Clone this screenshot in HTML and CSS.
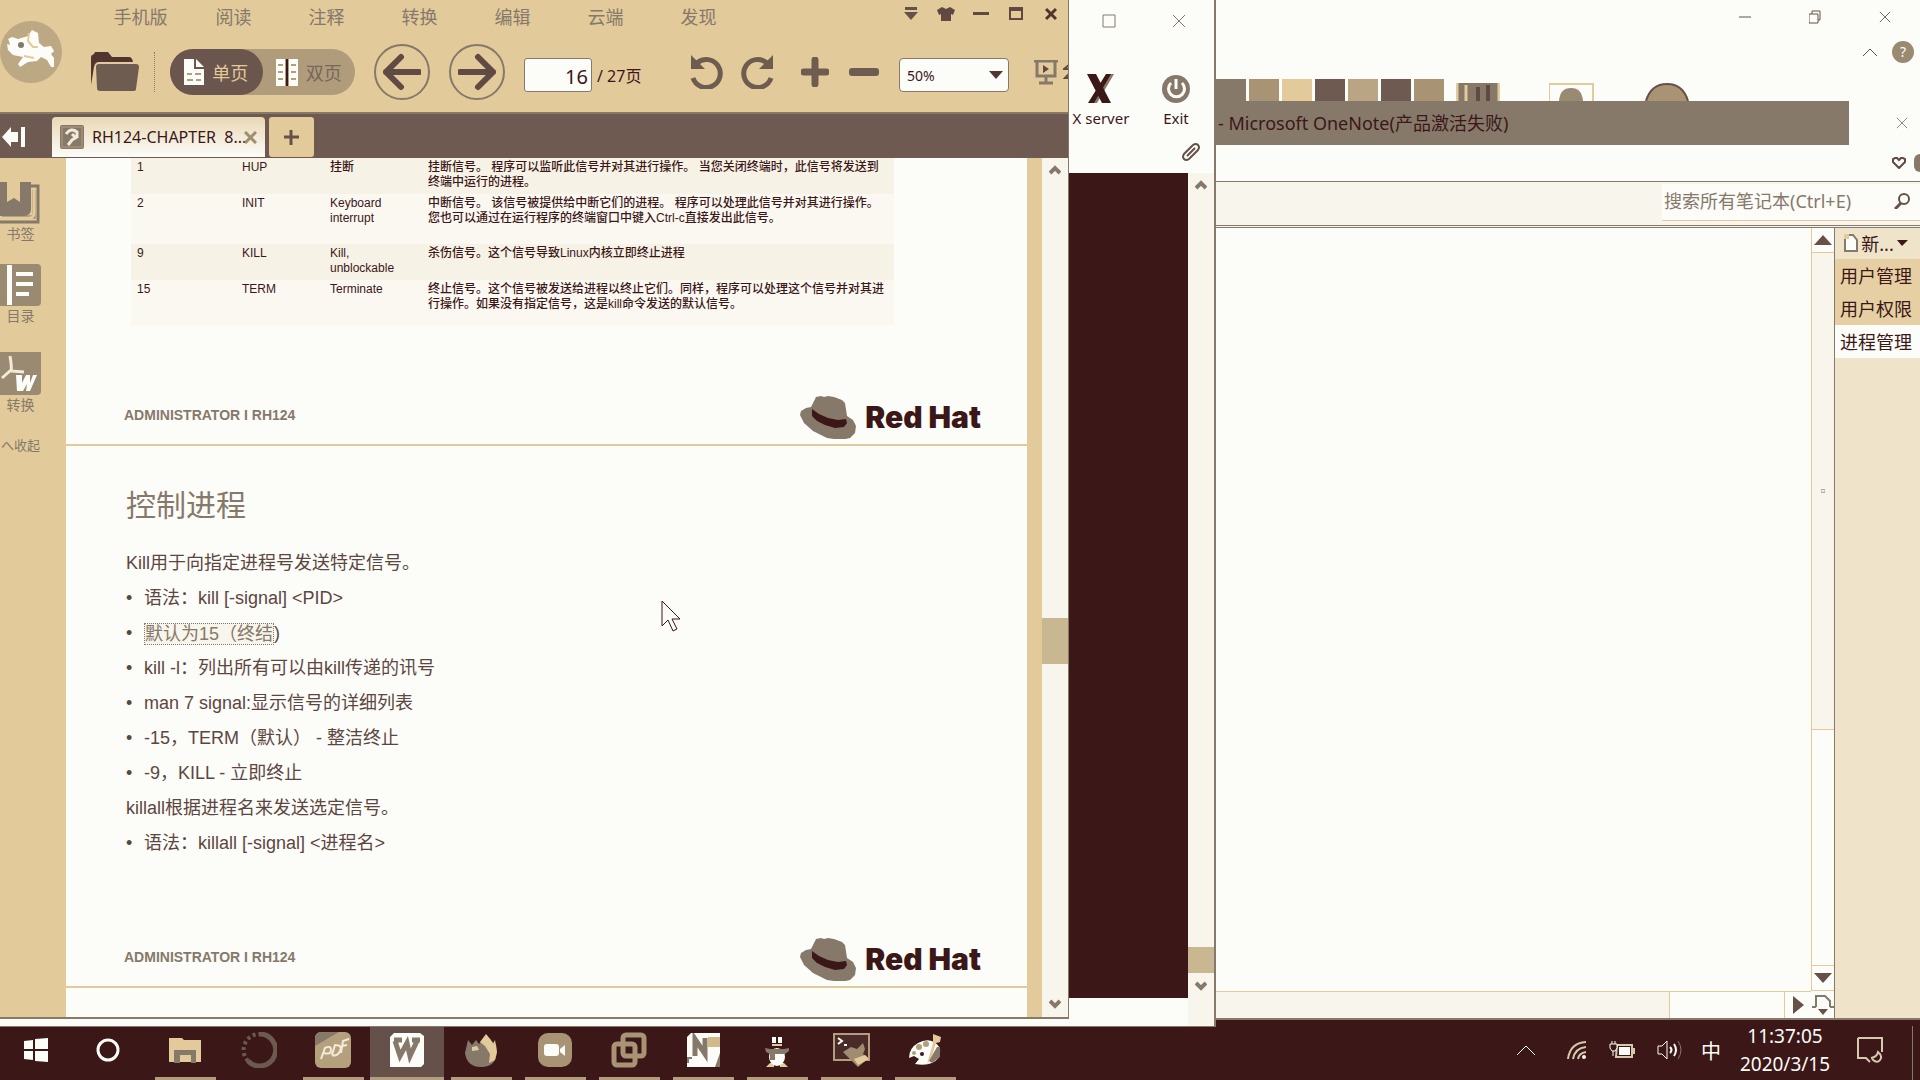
FILE: index.html
```html
<!DOCTYPE html>
<html lang="zh-CN">
<head>
<meta charset="utf-8">
<title>RH124-CHAPTER 8</title>
<link rel="stylesheet" href="styles.css">
</head>
<body>
<svg class="defs" aria-hidden="true">
  <symbol id="hat" viewBox="0 0 56 43">
    <path fill="#86796a" d="M16 1l5-1 3 1 4-1 6 1 8 3 3 3 2 13 6 4 3 6-1 7-5 5-9 2-14-2-14-7-9-8-4-8 1-4 5-3 5-1z"/>
    <path fill="#3b1718" d="M12 13l7 5 9 4 10 2 8-1 1 4-3 4-9 1-10-3-8-4-5-5z"/>
  </symbol>
  <symbol id="close" viewBox="0 0 14 14"><path d="M1 1l12 12M13 1L1 13" fill="none" stroke="currentColor"/></symbol>
</svg>

<main class="desktop">
  <div class="front">
    <section class="reader">
      <header class="reader-head">
        <svg class="elephant" width="64" height="62" viewBox="0 0 64 62">
          <circle cx="31" cy="31" r="31" fill="#bda884"/>
          <path fill="#fcfcf9" d="M8 18l4-2 6 2 10-3 4-6 6 3 1 10 5 4 7-1 3 5-3 3 3 4 0 9-3 0-4-7-6-3-4 4-9 1-8 5-2-3 5-7-10-2-5-5-1-6 3 1-1-4z"/>
          <circle cx="21" cy="24" r="3" fill="#86796a"/>
          <path d="M29 12l-1 8 5 6 5 0M24 35l10 2" fill="none" stroke="#e2ca9b" stroke-width="2"/>
        </svg>
        <div class="reader-bars">
          <div class="menu-row">
            <nav class="menu">
              <button>手机版</button><button>阅读</button><button>注释</button><button>转换</button><button>编辑</button><button>云端</button><button>发现</button>
            </nav>
            <div class="win-buttons">
              <button aria-label="菜单"><svg width="14" height="14" viewBox="0 0 14 14"><path fill="#665149" d="M1 0h12v3H1zM0 5h14L7 13z"/></svg></button>
              <button aria-label="皮肤"><svg width="18" height="14" viewBox="0 0 18 14"><path fill="#614840" d="M0 3l5-3 4 2 4-2 5 3-2 5-2-1v7H4V7L2 8z"/></svg></button>
              <button aria-label="最小化"><svg width="16" height="14"><path fill="#614840" d="M0 5h16v3H0z"/></svg></button>
              <button aria-label="最大化"><svg width="14" height="14"><path d="M1 1h12v11H1zM1 3h12" fill="none" stroke="#614840" stroke-width="2"/></svg></button>
              <button aria-label="关闭"><svg width="12" height="14" viewBox="0 0 12 14"><path d="M1 2l10 10M11 2L1 12" stroke="#513330" stroke-width="3"/></svg></button>
            </div>
          </div>
          <div class="tools">
            <button aria-label="打开"><svg width="49" height="40" viewBox="0 0 49 40"><path fill="#513531" d="M1 33V5q0-2 3-3l1-2h13l4 5h17q3 0 4 5H9q-4 0-5 5z"/><path fill="#6f5c51" d="M9 12h37q3 0 3 3l-3 22q0 2-3 2H10q-3 0-3-3L6 15q0-3 3-3z"/></svg></button>
            <i class="sep"></i>
            <div class="view-toggle">
              <button class="view on"><svg width="20" height="26"><path fill="#fcfcf9" d="M0 0h10v10h10v16H0zM12 0l8 8h-8z"/><path stroke="#b39d7c" d="M3 15h5m3 0h6M3 21h6m3 0h5" stroke-width="2"/></svg>单页</button>
              <button class="view"><svg width="22" height="27"><path fill="#fcfcf9" d="M0 0h9v27H0zM13 0h9v27h-9z"/><path stroke="#3b1718" stroke-width="2" d="M11 0v27"/><path stroke="#b39d7c" stroke-width="2" d="M2 6h5m8 0h5M2 13h5m8 0h5M2 20h5m8 0h5"/></svg>双页</button>
            </div>
            <button class="round" aria-label="上一页"><svg width="38" height="38" viewBox="0 0 38 38"><path d="M18 4L3 19l15 15M3 19h33" fill="none" stroke="#614a43" stroke-width="6" stroke-linecap="round"/></svg></button>
            <button class="round" aria-label="下一页"><svg width="38" height="38" viewBox="0 0 38 38"><path d="M20 4l15 15-15 15M35 19H2" fill="none" stroke="#614a43" stroke-width="6" stroke-linecap="round"/></svg></button>
            <label class="pageno"><input value="16" aria-label="页码">/ 27页</label>
            <div class="edit-tools">
              <button aria-label="向左旋转"><svg width="34" height="34" viewBox="0 0 34 34"><path d="M7 8a14 14 0 1 1-4 15" fill="none" stroke="#6f5c51" stroke-width="5"/><path fill="#6f5c51" d="M1 0v14h14z"/></svg></button>
              <button aria-label="向右旋转"><svg width="34" height="34" viewBox="0 0 34 34"><path d="M27 8a14 14 0 1 0 4 15" fill="none" stroke="#6f5c51" stroke-width="5"/><path fill="#6f5c51" d="M33 0v14H19z"/></svg></button>
            </div>
            <div class="zoom-tools">
              <button aria-label="放大"><svg width="28" height="30"><path d="M14 3v24M3 15h22" stroke="#6f5c51" stroke-width="7" stroke-linecap="round"/></svg></button>
              <button aria-label="缩小"><svg width="30" height="8"><rect width="30" height="8" rx="3" fill="#6f5c51"/></svg></button>
              <div class="select-wrap"><select aria-label="缩放"><option>50%</option></select><svg width="14" height="8"><path fill="#513531" d="M0 0h14L7 8z"/></svg></div>
            </div>
            <button aria-label="放映"><svg width="24" height="25"><path d="M0 1h24M3 2v14h18V2M12 16v7M5 23h14" fill="none" stroke="#86796a" stroke-width="3"/><path fill="#614a43" d="M9 5l6 4-6 4z"/></svg></button>
            <svg class="cut" width="5" height="16"><path d="M6 1L1 5h5M6 10l-4 4h4" fill="none" stroke="#614a43" stroke-width="2"/></svg>
          </div>
        </div>
      </header>

      <div class="tabs">
        <button class="collapse" aria-label="收起侧栏"><svg width="23" height="20"><path fill="#fcfcf9" d="M0 10l9-10v5h7v10H9v5zM19 0h4v20h-4z"/></svg></button>
        <div class="tab"><svg width="24" height="24" viewBox="0 0 24 24"><rect width="24" height="24" rx="2" fill="#86796a"/><rect x="2" y="2" width="20" height="20" fill="none" stroke="#b39d7c"/><path d="M6 9q5-7 11-2v5l-5 3-4 5M12 9l4 4" fill="none" stroke="#f3ead8" stroke-width="3"/></svg><span>RH124-CHAPTER&nbsp; 8...</span><button aria-label="关闭标签"><svg width="13" height="13" viewBox="0 0 13 13"><path d="M1 1l11 11M12 1L1 12" stroke="#a08c6f" stroke-width="3"/></svg></button></div>
        <button class="new-tab" aria-label="新建标签"><svg width="15" height="15"><path d="M7 0v15M0 7h15" stroke="#665149" stroke-width="3"/></svg></button>
      </div>

      <div class="reader-body">
        <aside class="rail">
          <button><svg width="41" height="42"><path fill="#86796a" d="M0 0h7v20l7-4 6 4V0h11v27q0 7-7 7H0z"/><path d="M31 4h7v36H0M34 8v27H2" fill="none" stroke="#86796a" stroke-width="3"/><path d="M34 6v25q0 5-5 5H2" fill="none" stroke="#e2ca9b" stroke-width="3"/></svg>书签</button>
          <button><svg width="41" height="42"><path fill="#9a8a72" d="M0 0h37q4 0 4 4v34q0 4-4 4H0z"/><path fill="#fcfcf9" d="M7 1h5v40H7zM16 8h17v4H16zM16 18h17v4H16zM16 28h13v4H16z"/></svg>目录</button>
          <button><svg width="41" height="43"><path fill="#9a8a72" d="M0 0h41v39q0 4-4 4H0z"/><path d="M10 4q2 12 1 15l13 1M11 18L2 26" fill="none" stroke="#f3ead8" stroke-width="3"/><path fill="#fcfcf9" d="M16 23h6v8l4-8h4v8l3-8h4l-7 16h-4l1-7-4 7h-6z"/></svg>转换</button>
          <button class="fold">へ收起</button>
        </aside>

        <div class="pages">
          <article class="page page-a">
            <table>
              <tr><td>1</td><td>HUP</td><td>挂断</td><td>挂断信号。 程序可以监听此信号并对其进行操作。 当您关闭终端时，此信号将发送到<br>终端中运行的进程。</td></tr>
              <tr class="tall"><td>2</td><td>INIT</td><td>Keyboard<br>interrupt</td><td>中断信号。 该信号被提供给中断它们的进程。 程序可以处理此信号并对其进行操作。<br>您也可以通过在运行程序的终端窗口中键入Ctrl-c直接发出此信号。</td></tr>
              <tr><td>9</td><td>KILL</td><td>Kill,<br>unblockable</td><td>杀伤信号。这个信号导致Linux内核立即终止进程</td></tr>
              <tr class="last"><td>15</td><td>TERM</td><td>Terminate</td><td>终止信号。这个信号被发送给进程以终止它们。同样，程序可以处理这个信号并对其进<br>行操作。如果没有指定信号，这是kill命令发送的默认信号。</td></tr>
            </table>
            <footer><span>ADMINISTRATOR I RH124</span><div class="brand"><svg width="56" height="43"><use href="#hat"/></svg><b>Red Hat</b></div></footer>
          </article>
          <article class="page page-b">
            <h1>控制进程</h1>
            <p>Kill用于向指定进程号发送特定信号。</p>
            <ul>
              <li>语法：kill [-signal] &lt;PID&gt;</li>
              <li><mark>默认为15（终结</mark>)</li>
              <li>kill -l：列出所有可以由kill传递的讯号</li>
              <li>man 7 signal:显示信号的详细列表</li>
              <li>-15，TERM（默认） - 整洁终止</li>
              <li>-9，KILL - 立即终止</li>
            </ul>
            <p>killall根据进程名来发送选定信号。</p>
            <ul><li>语法：killall [-signal] &lt;进程名&gt;</li></ul>
            <footer><span>ADMINISTRATOR I RH124</span><div class="brand"><svg width="56" height="43"><use href="#hat"/></svg><b>Red Hat</b></div></footer>
            <svg class="pointer" width="20" height="32" viewBox="0 0 20 32"><path d="M1 1v25l6-6 5 11 4-2-5-10h8z" fill="#fcfcf9" stroke="#3b1718"/></svg>
          </article>
        </div>

        <div class="scroll">
          <svg width="12" height="10"><path d="M1 8l5-5 5 5" fill="none" stroke="#86796a" stroke-width="4"/></svg>
          <i></i>
          <svg width="12" height="10"><path d="M1 2l5 5 5-5" fill="none" stroke="#86796a" stroke-width="4"/></svg>
        </div>
      </div>
    </section>

    <section class="terminal">
      <div class="term-win"><button aria-label="最大化"><svg width="14" height="14"><path d="M1 1h12v12H1z" fill="none" stroke="#86796a"/></svg></button><button aria-label="关闭"><svg width="14" height="14"><use href="#close"/></svg></button></div>
      <div class="term-tools">
        <button><svg width="28" height="30" viewBox="0 0 28 30"><path fill="#86796a" d="M21 0h6L10 29H3z"/><path fill="#3b1718" d="M0 0h9l15 29h-9zM19 0h5L7 29H1z"/></svg>X server</button>
        <button><svg width="29" height="30" viewBox="0 0 29 30"><circle cx="14" cy="15" r="14" fill="#86796a"/><path d="M9 9a8 8 0 1 0 11 0M14 5v10" fill="none" stroke="#fcfcf9" stroke-width="3"/></svg>Exit</button>
      </div>
      <div class="clip"><svg width="20" height="20" viewBox="0 0 20 20"><path d="M3 12L12 3q3-2 5 0t0 5l-9 9q-3 2-5 0t0-5l8-8M6 14l8-8" fill="none" stroke="#665149" stroke-width="2"/></svg></div>
      <div class="term-body">
        <div class="screen"></div>
        <div class="scroll">
          <svg width="12" height="10"><path d="M1 8l5-5 5 5" fill="none" stroke="#86796a" stroke-width="4"/></svg>
          <i></i>
          <svg width="12" height="10"><path d="M1 2l5 5 5-5" fill="none" stroke="#86796a" stroke-width="4"/></svg>
        </div>
      </div>
    </section>
  </div>

  <section class="note">
    <div class="note-top">
      <div class="note-win">
        <button aria-label="最小化"><svg width="12" height="14"><path d="M0 7h12" stroke="#665149"/></svg></button>
        <button aria-label="还原"><svg width="12" height="14"><path d="M0 4h9v9H0zM3 4V1h8v9H9" fill="none" stroke="#665149"/></svg></button>
        <button aria-label="关闭"><svg width="12" height="12"><use href="#close"/></svg></button>
      </div>
      <div class="note-help"><svg width="16" height="10"><path d="M1 9l7-7 7 7" fill="none" stroke="#665149"/></svg><span>?</span></div>
      <div class="thumbs">
        <i class="g1"></i><i class="g2"></i><i class="g3"></i><i class="g4"></i><i class="g5"></i><i class="g4"></i><i class="g2"></i>
        <svg width="44" height="18"><path fill="#86796a" d="M0 0h44v18H0z"/><path d="M1 0v18M43 0v18M10 2v16" stroke="#e2ca9b" stroke-width="3"/><path d="M22 4v14M32 2v16" stroke="#614a43" stroke-width="4"/></svg>
        <svg class="t2" width="45" height="18"><path d="M0 18V1h44v17" fill="none" stroke="#e2ca9b" stroke-width="2"/><path fill="#9a8a72" d="M10 18q1-13 12-13t12 13z"/></svg>
        <svg class="t3" width="45" height="18"><path d="M1 18Q6 1 22 1t21 17" fill="#a89474" stroke="#665149" stroke-width="2"/></svg>
      </div>
    </div>
    <div class="note-title"><h2>- Microsoft OneNote(产品激活失败)</h2><button aria-label="关闭"><svg width="12" height="14"><use href="#close"/></svg></button></div>
    <div class="note-fav"><svg width="14" height="12"><path d="M7 11L1 5V2l2-1h2l2 2 2-2h2l2 1v3z" fill="none" stroke="#614a43" stroke-width="2"/></svg><i></i></div>
    <div class="search-row"><label class="search"><input aria-label="搜索" placeholder="搜索所有笔记本(Ctrl+E)"><svg width="16" height="16"><circle cx="10" cy="6" r="5" fill="none" stroke="#665149" stroke-width="2"/><path d="M7 10l-6 6" stroke="#665149" stroke-width="3"/></svg></label></div>
    <div class="note-body">
      <div class="canvas"></div>
      <div class="vbar">
        <span><svg width="18" height="10"><path fill="#665149" d="M9 0l9 10H0z"/></svg></span><i>▫</i><em></em><span><svg width="18" height="10"><path fill="#665149" d="M0 0h18L9 10z"/></svg></span>
      </div>
      <aside class="note-pages">
        <button class="new"><svg width="14" height="18"><path d="M1 1h8l4 5v11H1z" fill="#fcfcf9" stroke="#86796a" stroke-width="2"/><path fill="#e2ca9b" d="M0 0h5v5H0z"/></svg>新...<svg width="11" height="6"><path fill="#3b1718" d="M0 0h11L5 6z"/></svg></button>
        <button>用户管理</button><button>用户权限</button><button class="on">进程管理</button>
      </aside>
      <div class="hbar"><i></i><em></em><span><svg width="11" height="18"><path fill="#665149" d="M0 0l11 9-11 9z"/></svg></span></div>
      <div class="corner"><svg width="22" height="20"><path d="M4 12V1h9l5 5v6M0 12h4m14 0h4" fill="none" stroke="#86796a" stroke-width="2"/><path fill="#665149" d="M6 14h10l-5 6z"/></svg></div>
    </div>
  </section>
</main>

<footer class="taskbar">
  <div class="apps">
    <button aria-label="开始"><svg width="24" height="24"><path fill="#fcfcf9" d="M0 3l9-1v9H0zM11 1l13-1v11H11zM0 13h9v9l-9-1zM11 13h13v11l-13-1z"/></svg></button>
    <button aria-label="Cortana"><svg width="24" height="24"><circle cx="12" cy="12" r="10" fill="none" stroke="#fcfcf9" stroke-width="3"/></svg></button>
    <button class="run" aria-label="文件"><svg width="32" height="26"><path fill="#e2ca9b" d="M0 1h13l2 2h17v22H0z"/><path fill="#86796a" d="M5 13h22v13h-5v-8H11v8H5z"/></svg></button>
    <button aria-label="浏览器"><svg width="36" height="36"><path d="M18 2a16 16 0 1 1-11 27" fill="none" stroke="#6c5a50" stroke-width="5"/><path d="M7 29A16 16 0 0 1 18 2" fill="none" stroke="#6c5a50" stroke-width="4" stroke-dasharray="3 3"/></svg></button>
    <button class="run" aria-label="PDF"><svg width="36" height="36" viewBox="0 0 36 36"><rect width="36" height="36" rx="6" fill="#b5a07e"/><path fill="#86796a" d="M4 0h20L0 14V4z"/><path d="M6 27l4-11q6-3 6 2t-7 3M17 23l3-10q8 0 5 6t-8 4M26 21l2-12 6-2M27 14l5-1" fill="none" stroke="#f3ead8" stroke-width="2"/></svg></button>
    <button class="run active" aria-label="WPS"><svg width="34" height="34" viewBox="0 0 34 34"><path fill="#fcfcf9" d="M4 0h26l4 3v28l-3 3H0V4z"/><path d="M5 8l5 15 7-13 3 13 7-15M4 7h8M22 7h8" fill="none" stroke="#86796a" stroke-width="5"/></svg></button>
    <button class="run" aria-label="Firefox"><svg width="32" height="33" viewBox="0 0 32 33"><path fill="#86796a" d="M0 19L3 6l4 5 4-5 3 4 5-6 6 2 6 4q4 23-15 23Q2 33 0 19z"/><path fill="#e2ca9b" d="M15 8l6-8 5 6 2 4 2-4 2 12-2 8-6 3 1-9-5-8zM7 13l5-1 2 4-7 1z"/></svg></button>
    <button class="run" aria-label="会议"><svg width="34" height="34"><rect width="34" height="34" rx="10" fill="#a89474"/><rect x="6" y="11" width="15" height="12" rx="3" fill="#fcfcf9"/><path fill="#fcfcf9" d="M22 16l5-4v11l-5-4z"/></svg></button>
    <button class="run" aria-label="虚拟机"><svg width="36" height="36"><rect x="12" y="3" width="21" height="21" rx="3" fill="none" stroke="#a89474" stroke-width="5"/><rect x="3" y="12" width="21" height="21" rx="3" fill="none" stroke="#a89474" stroke-width="5"/></svg></button>
    <button class="run" aria-label="OneNote"><svg width="33" height="34"><path fill="#fcfcf9" d="M4 0h29v34H0V4z"/><path fill="#d2b98c" d="M21 4h12v10H21z"/><path d="M8 23V6l10 15V5" fill="none" stroke="#86796a" stroke-width="5"/><path fill="#86796a" d="M0 24h5v2H2v4H0zM33 20v14h-5z"/></svg></button>
    <button class="run" aria-label="QQ"><svg width="24" height="34" viewBox="0 0 24 34"><path fill="#fcfcf9" d="M7 4h4v6H7zM13 4h4v6h-4z"/><path fill="#e2ca9b" d="M7 11h10v2H7zM1 34l4-4h4v4zM23 34l-4-4h-4v4z"/><ellipse cx="12" cy="24" rx="8" ry="9" fill="#fcfcf9"/><path fill="#86796a" d="M0 15l5 1h14l5-1v3l-4 3H10v6H5v-6l-4-2z"/></svg></button>
    <button class="run" aria-label="MobaXterm"><svg width="37" height="35"><path d="M1 1h35v26H1z" fill="#4b2b29" stroke="#b39d7c" stroke-width="2"/><path d="M5 5l4 3-4 3M11 12h3" fill="none" stroke="#fcfcf9" stroke-width="2"/><path fill="#a08c6f" d="M10 19l8-5 6 2 6-6 2 6-2 5 6 4-11 9z"/><path fill="#e2ca9b" d="M21 26l11-4 4 4-11 6z"/></svg></button>
    <button class="run" aria-label="画图"><svg width="32" height="33" viewBox="0 0 32 33"><path fill="#fcfcf9" d="M0 24q0-10 9-15t16-1q7 4 6 11t-8 10-17 1l4-5-5-3z"/><path fill="#e2ca9b" d="M24 0l8 3-1 5-4 1-5 16-4 5 6-21z"/><circle cx="10" cy="13" r="3" fill="#b39d7c"/><circle cx="17" cy="10" r="3" fill="#b39d7c"/><circle cx="5" cy="19" r="2" fill="#b39d7c"/><circle cx="13" cy="20" r="2" fill="#3b1718"/><path fill="#86796a" d="M28 13h3v10l-8 6-3-2z"/></svg></button>
  </div>
  <div class="tray">
    <svg width="20" height="12"><path d="M1 11l9-9 9 9" fill="none" stroke="#fcfcf9"/></svg>
    <svg width="20" height="20"><path d="M1 19Q3 3 19 2M6 19Q8 8 19 7M11 19q1-6 8-7" fill="none" stroke="#d6c9b0" stroke-width="2"/><circle cx="17" cy="17" r="2" fill="#fcfcf9"/></svg>
    <svg width="26" height="18"><path d="M8 4h15v12H7zM23 8h2v4h-2" fill="none" stroke="#d6c9b0" stroke-width="2"/><path fill="#fcfcf9" d="M10 6h11v8H10z"/><path fill="#3b1718" stroke="#fcfcf9" d="M1 3h7v4l-2 3H3L1 7zM3 0v3M6 0v3M4 10v5"/></svg>
    <svg width="26" height="20"><path d="M1 6h4l5-5v18l-5-5H1z" fill="none" stroke="#fcfcf9"/><path d="M13 7q3 3 0 6M17 4q4 6 0 12" fill="none" stroke="#fcfcf9" stroke-width="2"/><path d="M21 1q6 9 0 18" fill="none" stroke="#86796a"/></svg>
    <span class="ime">中</span>
    <time>11:37:05<br>2020/3/15</time>
    <svg width="26" height="26"><path d="M1 1h24v14M1 1v20h8l4 4M14 21q6-1 7-6 5 4 2 8t-8-1" fill="none" stroke="#d6c9b0" stroke-width="2"/></svg>
    <i></i>
  </div>
</footer>
</body>
</html>
```

FILE: styles.css
```css
:root {
  --paper: #fcfcf9;
  --tan: #e2ca9b;
  --grey: #86796a;
  --ink: #3b1718;
  --mist: #f8f5ec;
  --sand: #efe3ca;
}
* { box-sizing: border-box; }
body {
  margin: 0;
  height: 100vh;
  display: flex;
  flex-direction: column;
  overflow: hidden;
  background: var(--ink);
  color: var(--ink);
  font-family: "Noto Sans", "Noto Sans CJK SC", sans-serif;
  font-size: 18px;
}
button, input, select { font: inherit; color: inherit; }
button { margin: 0; padding: 0; border: 0; background: none; display: flex; align-items: center; justify-content: center; }
svg { display: block; flex: none; }
.defs { position: absolute; width: 0; height: 0; }

.desktop { flex: 1; min-height: 0; display: grid; grid-template-columns: minmax(0, 1216fr) minmax(0, 704fr); }
.front { display: grid; grid-template-columns: minmax(0, 1fr) 147px; margin-bottom: -7px; background: var(--paper); z-index: 1; min-height: 0; border-bottom: 1px solid var(--grey); }

/* PDF reader */
.reader { display: flex; flex-direction: column; min-height: 0; margin-bottom: 7px; border-right: 1px solid var(--grey); border-bottom: 2px solid var(--grey); background: var(--tan); }
.reader-head { display: flex; height: 112px; overflow: hidden; flex: none; }
.elephant { margin-top: 21px; }
.reader-bars { flex: 1; min-width: 0; }
.menu-row { display: flex; justify-content: space-between; height: 36px; }
.menu { display: flex; height: 32px; padding-left: 30px; color: var(--grey); }
.menu button { width: 93px; }
.win-buttons { display: flex; height: 28px; }
.win-buttons button { width: 35px; }
.tools { display: flex; align-items: center; height: 72px; padding-left: 26px; }
.sep { height: 40px; margin: 0 15px; border-left: 1px dotted var(--grey); }
.view-toggle { display: flex; width: 185px; height: 46px; border-radius: 23px; background: #b09b7a; }
.view { flex: 1; gap: 8px; color: #75675a; }
.view.on { background: #6a564d; color: var(--tan); border-radius: 23px; }
.round { width: 56px; height: 56px; margin-left: 19px; border: 2px solid var(--grey); border-radius: 50%; }
.pageno { display: flex; align-items: center; gap: 5px; margin-left: 19px; padding-top: 6px; font-size: 16px; width: 166px; white-space: nowrap; }
.pageno input { width: 68px; height: 34px; padding: 2px 3px 0; border: 1px solid var(--grey); border-radius: 3px; background: var(--paper); text-align: right; font-size: 20px; }
.edit-tools { display: flex; gap: 16px; }
.zoom-tools { display: flex; align-items: center; gap: 20px; margin: 0 25px 0 27px; }
.select-wrap { display: grid; align-items: center; padding-top: 6px; }
.select-wrap > * { grid-area: 1 / 1; }
.select-wrap svg { justify-self: end; margin-right: 6px; }
select { appearance: none; width: 110px; height: 34px; padding: 0 7px; border: 1px solid var(--grey); border-radius: 4px; background: var(--paper); font-size: 14px; }
.cut { margin-left: 5px; }

.tabs { display: flex; height: 46px; flex: none; padding: 3px 0 1px; background: #6e5a50; border-top: 2px solid var(--grey); font-size: 16px; }
.collapse { width: 26px; margin-right: 26px; }
.tab { display: flex; align-items: center; gap: 8px; width: 213px; padding: 0 8px; border-radius: 4px 4px 0 0; background: linear-gradient(#ead8b4, var(--paper)); white-space: nowrap; }
.tab span { flex: 1; min-width: 0; }
.new-tab { width: 45px; margin-left: 4px; background: var(--tan); border-radius: 3px; }

.reader-body { flex: 1; min-height: 0; display: grid; grid-template-columns: 66px minmax(0, 1fr) 15px 26px; }
.rail { display: flex; flex-direction: column; align-items: flex-start; padding-top: 24px; gap: 20px; font-size: 14px; color: var(--grey); }
.rail button { flex-direction: column; line-height: 20px; width: 41px; }
.rail button:nth-child(2) { margin-bottom: 6px; }
.rail .fold { font-size: 13px; }
.pages { overflow: hidden; background: var(--paper); }
.page { position: relative; display: flex; flex-direction: column; padding: 0 46px 0 58px; border-bottom: 2px solid var(--tan); font-family: "Liberation Sans", "Noto Sans CJK SC", sans-serif; }
.page-a { height: 288px; padding-top: 0; }
.page-b { height: 542px; padding-top: 34px; }
table { width: 763px; margin-left: 7px; table-layout: fixed; border-collapse: collapse; font-size: 12px; font-weight: 500; line-height: 15px; white-space: nowrap; }
tr { height: 36px; background: #f7f2e6; }
tr.tall { height: 50px; background: #faf8f1; }
tr.last { height: 45px; background: #faf8f1; }
td { padding: 2px 6px 0; vertical-align: top; }
td:nth-child(1) { width: 105px; }
td:nth-child(2) { width: 88px; }
td:nth-child(3) { width: 98px; }
.page footer { display: flex; align-items: center; justify-content: space-between; margin-top: auto; padding-bottom: 5px; color: var(--grey); font-weight: bold; font-size: 14px; }
.page footer span { padding-bottom: 5px; }
.brand { display: flex; align-items: center; gap: 9px; color: var(--ink); font-family: Inter, sans-serif; font-size: 30px; line-height: 43px; }
h1 { margin: 0 0 14px 2px; font-size: 30px; line-height: 52px; font-weight: 400; color: var(--grey); }
.page p, .page ul { margin: 0 0 0 2px; padding: 0; font-size: 18px; line-height: 35px; color: #5d463f; }
.page li { display: flex; align-items: center; height: 35px; }
.page li::before { content: "•"; width: 18px; }
mark { height: 22px; line-height: 20px; border: 1px dotted var(--grey); background: var(--mist); color: var(--grey); }
.pointer { position: absolute; left: 595px; top: 154px; }

.scroll { display: flex; flex-direction: column; align-items: center; background: var(--mist); }
.reader-body .scroll { grid-column: 4; padding: 7px 0 8px; }
.scroll i { width: 100%; background: #c9b792; }
.reader-body .scroll i { height: 46px; margin: 443px 0 auto; }

/* Terminal */
.terminal { display: flex; flex-direction: column; background: var(--paper); border-right: 2px solid var(--grey); min-height: 0; }
.term-win { display: flex; justify-content: flex-end; height: 42px; color: var(--grey); }
.term-win button { width: 70px; }
.term-tools { display: flex; margin-top: 32px; font-size: 15px; white-space: nowrap; }
.term-tools button { flex-direction: column; width: 60px; margin-left: 2px; line-height: 26px; gap: 1px; }
.term-tools button + button { width: 54px; margin-left: 18px; }
.clip { display: flex; justify-content: flex-end; padding: 11px 13px 11px 0; }
.term-body { flex: 1; display: flex; min-height: 0; }
.screen { flex: 1; margin-bottom: 28px; background: var(--ink); }
.term-body .scroll { width: 26px; padding: 7px 0 35px; }
.term-body .scroll i { height: 26px; margin: auto 0 8px; }

/* Notebook */
.note { display: flex; flex-direction: column; min-height: 0; background: var(--paper); color: var(--ink); }
.note-top { display: flex; flex-direction: column; height: 101px; flex: none; color: #665149; }
.note-win { display: flex; justify-content: flex-end; height: 33px; }
.note-win button { width: 70px; }
.note-help { display: flex; justify-content: flex-end; align-items: center; gap: 14px; height: 38px; padding-right: 6px; }
.note-help span { width: 22px; height: 22px; border-radius: 50%; background: #9a8a72; color: var(--paper); text-align: center; font-size: 14px; line-height: 22px; }
.thumbs { display: flex; align-items: flex-end; gap: 3px; margin-top: auto; }
.thumbs i { width: 30px; height: 22px; }
.thumbs svg { margin-left: 9px; }
.thumbs .t2 { margin-left: 46px; }
.thumbs .t3 { margin-left: 48px; }
.g1 { background: var(--grey); }
.g2 { background: #a89474; }
.g3 { background: var(--tan); }
.g4 { background: #6e5a50; }
.g5 { background: #b9a583; }
.note-title { display: flex; height: 44px; flex: none; }
h2 { flex: 1; margin: 0; padding-left: 2px; background: var(--grey); font-size: 18px; line-height: 44px; font-weight: 400; }
.note-title button { width: 71px; padding-left: 34px; color: var(--grey); }
.note-fav { display: flex; align-items: center; justify-content: flex-end; gap: 8px; height: 37px; flex: none; border-bottom: 1px solid var(--grey); }
.note-fav i { width: 6px; height: 18px; border-radius: 9px 0 0 9px; background: var(--grey); }
.search-row { display: flex; justify-content: flex-end; height: 46px; flex: none; padding: 2px 0 4px; background: var(--mist); border-bottom: 3px double var(--grey); }
.search { display: flex; align-items: center; width: 258px; padding: 0 10px 3px 2px; background: var(--paper); border-bottom: 1px solid var(--tan); }
.search input { flex: 1; min-width: 0; padding: 0; border: 0; background: none; }
.search input::placeholder { color: var(--grey); opacity: 1; }
.note-body { flex: 1; min-height: 0; display: grid; grid-template-columns: minmax(0, 1fr) 24px 85px; grid-template-rows: minmax(0, 1fr) 27px; border-bottom: 2px solid var(--grey); }
.vbar { display: flex; flex-direction: column; border-left: 1px solid var(--tan); border-right: 1px solid var(--grey); }
.vbar span { display: grid; place-items: center; height: 25px; border-bottom: 1px solid var(--tan); }
.vbar i { display: grid; place-items: center; flex: 477; background: var(--mist); border-bottom: 1px solid var(--tan); font-size: 12px; font-style: normal; color: var(--grey); }
.vbar em { flex: 236; border-bottom: 1px solid var(--tan); }
.note-pages { grid-column: 3; grid-row: 1 / 3; background: var(--sand); }
.note-pages button { width: 100%; height: 33px; padding: 0 3px 2px 0; background: #e5cfa3; }
.note-pages .new { height: 31px; gap: 3px; background: var(--sand); }
.note-pages .on { background: var(--paper); }
.hbar { grid-row: 2; display: flex; border-top: 1px solid var(--tan); }
.hbar i { flex: 454; background: var(--mist); border-right: 1px solid var(--tan); }
.hbar em { flex: 114; border-right: 1px solid var(--tan); }
.hbar span { display: grid; place-items: center; width: 26px; }
.corner { grid-row: 2; grid-column: 2; display: grid; place-items: center; border-right: 1px solid var(--grey); }

/* Taskbar */
.taskbar { display: flex; justify-content: space-between; height: 60px; flex: none; background: var(--ink); color: var(--paper); }
.apps { display: flex; padding-top: 7px; }
.apps button { width: 74px; padding-bottom: 4px; border-bottom: 3px solid transparent; }
.apps button:nth-child(-n+2) { width: 72px; }
.apps button:nth-child(2) { margin-right: 4px; }
.apps .run { background: linear-gradient(#b39d7c, #b39d7c) bottom / 61px 3px no-repeat border-box; }
.apps .active { background: #65504a; border-bottom-color: #b39d7c; }
.tray { display: flex; align-items: center; }
.tray svg:nth-child(1) { margin-right: 31px; }
.tray svg:nth-child(2) { margin-right: 22px; }
.tray svg:nth-child(3) { margin-right: 22px; }
.tray svg:nth-child(4) { margin-right: 18px; }
.ime { width: 22px; margin-right: 14px; font-size: 20px; }
time { width: 96px; margin-right: 24px; text-align: center; font-size: 19px; line-height: 28px; }
.tray i { height: 54px; width: 8px; margin-left: 29px; border-left: 1px solid var(--grey); align-self: flex-end; }
```
